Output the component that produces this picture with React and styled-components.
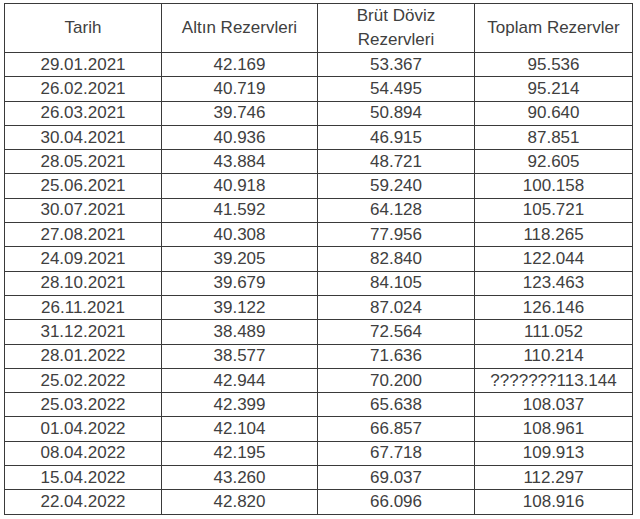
import React from "react";
import styled, { createGlobalStyle } from "styled-components";

const Global = createGlobalStyle`
  html, body { margin: 0; padding: 0; background: #fff; }
  body { font-family: "Liberation Sans", Arial, sans-serif; }
`;

const Page = styled.div`
  padding: 3px 8px 0 4px;
`;

const Table = styled.table`
  width: 628px;
  border-collapse: collapse;
  table-layout: fixed;
  color: #404040;
  font-size: 17px;
`;

const Col = styled.col`
  width: ${(p) => p.$w}px;
`;

const HeadCell = styled.th`
  font-weight: normal;
  border: 1px solid #3a3a3a;
  height: 45px;
  padding: 0 4px;
  line-height: 24px;
  text-align: center;
  vertical-align: middle;
`;

const Row = styled.tr`
  height: 24.3px;
`;

const Cell = styled.td`
  border: 1px solid #3a3a3a;
  padding: 0;
  line-height: 22px;
  text-align: center;
  vertical-align: middle;
`;

const rows = [
  ["29.01.2021", "42.169", "53.367", "95.536"],
  ["26.02.2021", "40.719", "54.495", "95.214"],
  ["26.03.2021", "39.746", "50.894", "90.640"],
  ["30.04.2021", "40.936", "46.915", "87.851"],
  ["28.05.2021", "43.884", "48.721", "92.605"],
  ["25.06.2021", "40.918", "59.240", "100.158"],
  ["30.07.2021", "41.592", "64.128", "105.721"],
  ["27.08.2021", "40.308", "77.956", "118.265"],
  ["24.09.2021", "39.205", "82.840", "122.044"],
  ["28.10.2021", "39.679", "84.105", "123.463"],
  ["26.11.2021", "39.122", "87.024", "126.146"],
  ["31.12.2021", "38.489", "72.564", "111.052"],
  ["28.01.2022", "38.577", "71.636", "110.214"],
  ["25.02.2022", "42.944", "70.200", "???????113.144"],
  ["25.03.2022", "42.399", "65.638", "108.037"],
  ["01.04.2022", "42.104", "66.857", "108.961"],
  ["08.04.2022", "42.195", "67.718", "109.913"],
  ["15.04.2022", "43.260", "69.037", "112.297"],
  ["22.04.2022", "42.820", "66.096", "108.916"],
];

export default function App() {
  return (
    <Page>
      <Global />
      <Table>
        <colgroup>
          <Col $w={157} />
          <Col $w={156} />
          <Col $w={157} />
          <Col $w={158} />
        </colgroup>
        <thead>
          <tr>
            <HeadCell>Tarih</HeadCell>
            <HeadCell>Altın Rezervleri</HeadCell>
            <HeadCell>
              Brüt Döviz
              <br />
              Rezervleri
            </HeadCell>
            <HeadCell>Toplam Rezervler</HeadCell>
          </tr>
        </thead>
        <tbody>
          {rows.map((r) => (
            <Row key={r[0]}>
              {r.map((c, i) => (
                <Cell key={i}>{c}</Cell>
              ))}
            </Row>
          ))}
        </tbody>
      </Table>
    </Page>
  );
}
